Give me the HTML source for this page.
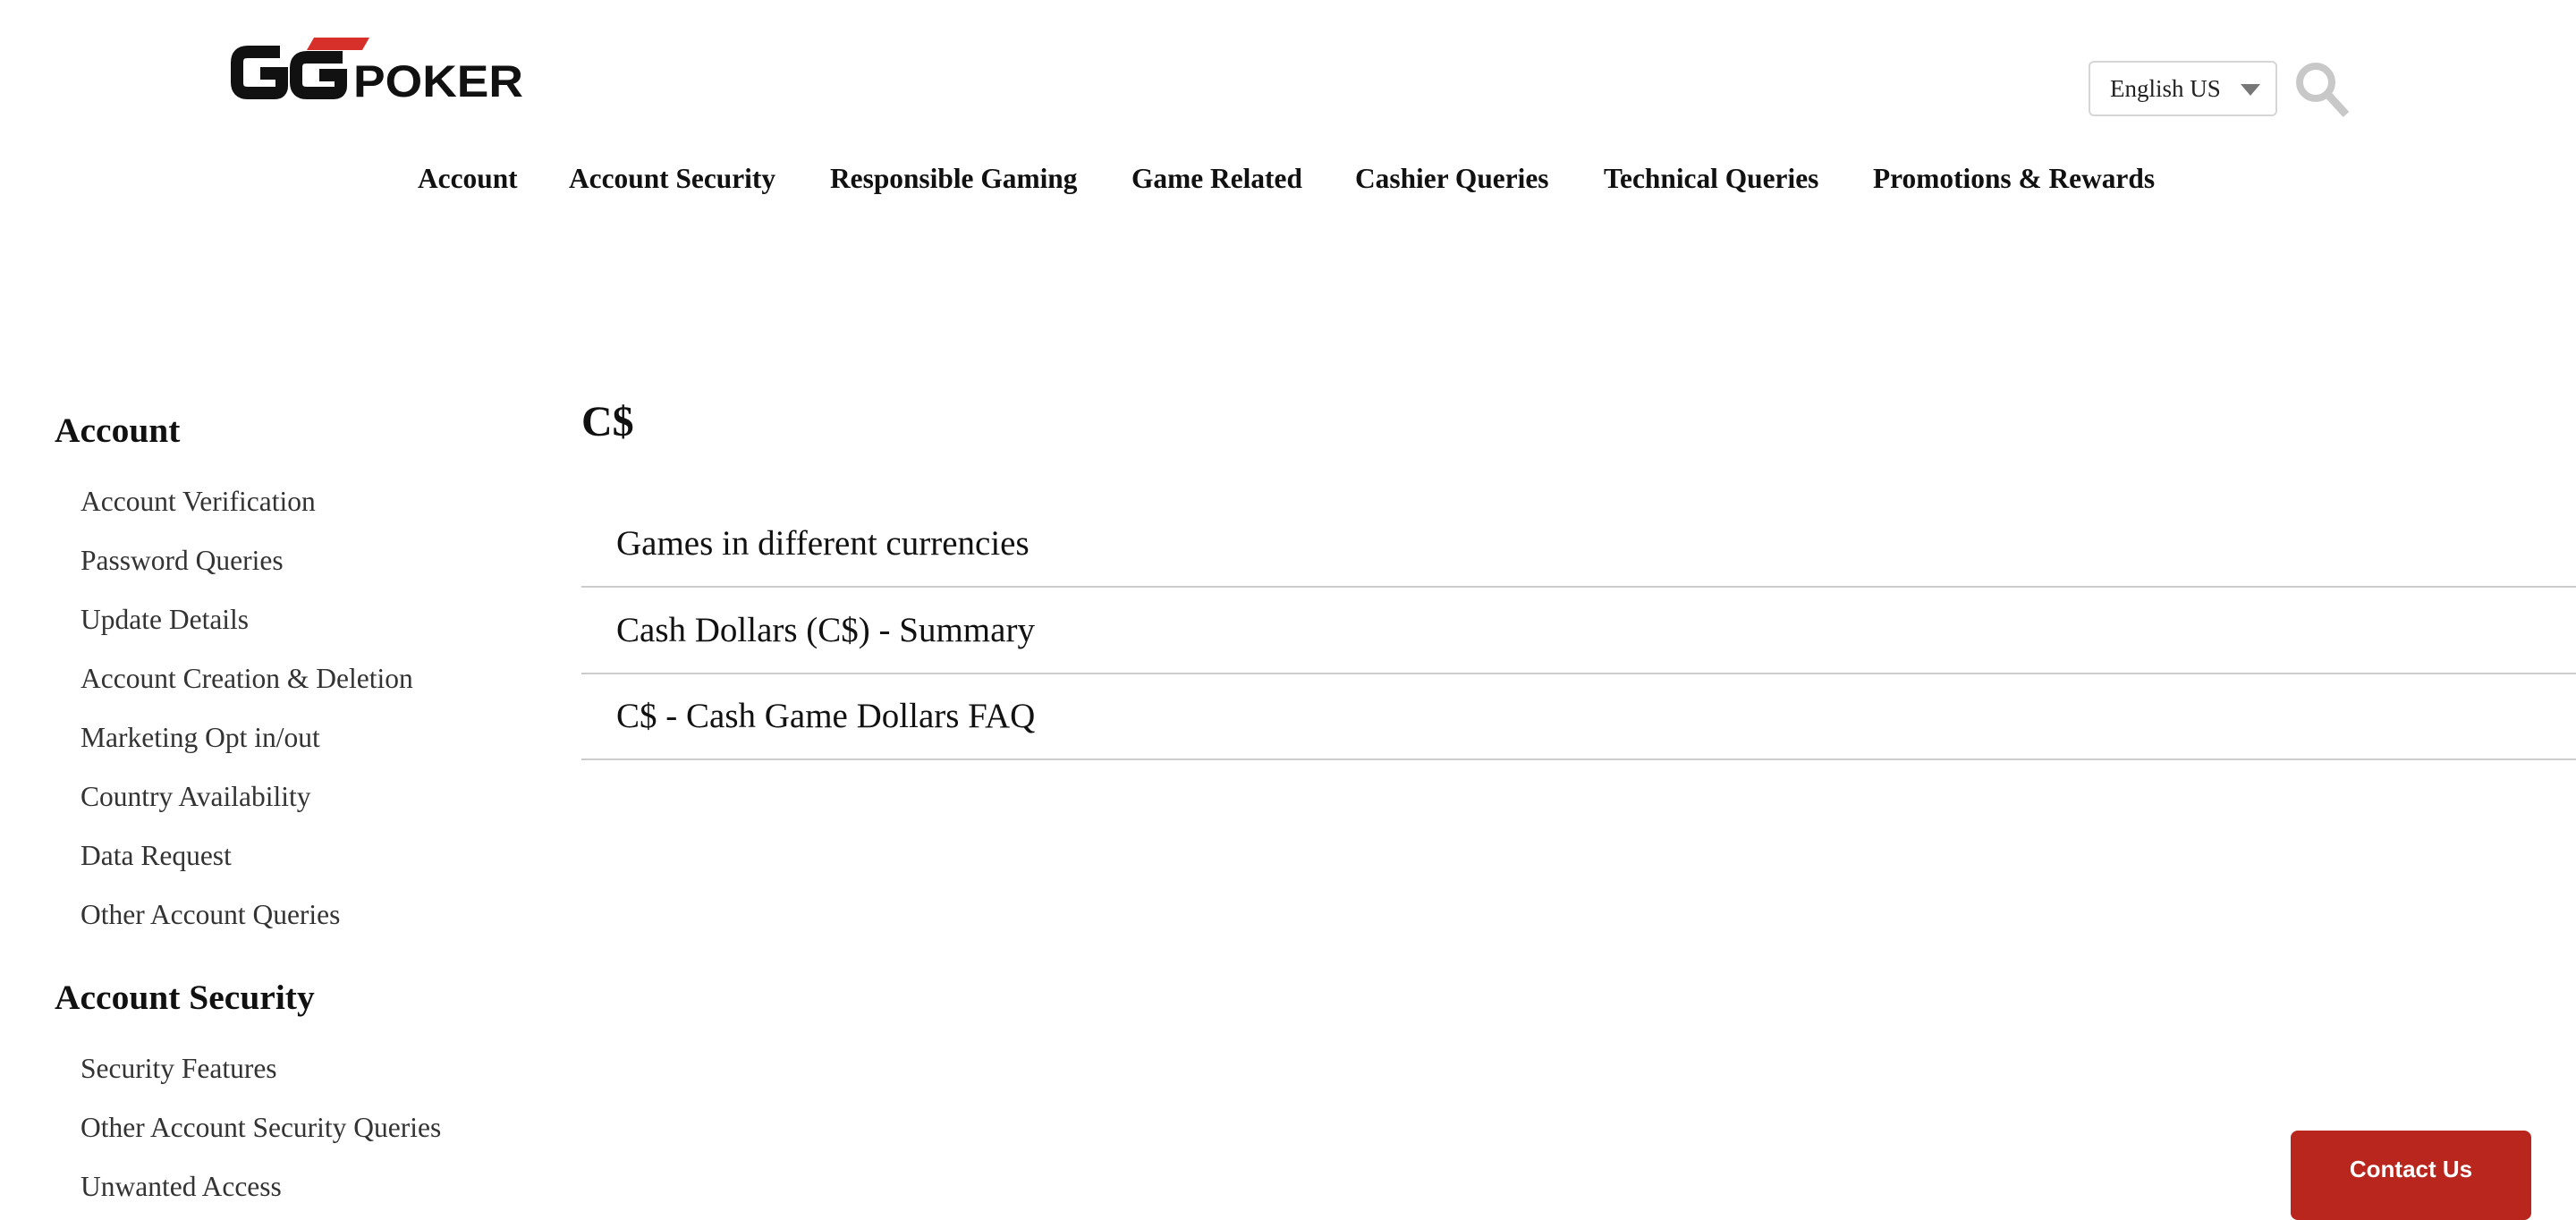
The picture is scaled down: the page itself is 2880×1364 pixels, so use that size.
<!DOCTYPE html>
<html><head><meta charset="utf-8"><style>
*{margin:0;padding:0;box-sizing:border-box}
body{width:2880px;height:1350px;overflow:hidden;background:#fff;font-family:"Liberation Serif",serif;color:#111;position:relative}
.a{position:absolute;white-space:nowrap}
.nav{font-weight:bold;font-size:31.4px;top:182px}
.sh{font-weight:bold;font-size:39.5px;left:61px}
.si{font-size:31.5px;left:90px;color:#333}
.li{left:689px;font-size:39px;color:#111}
.ln{position:absolute;left:650px;right:0;height:2px;background:#ccc}
</style></head><body>
<svg class="a" style="left:255px;top:40px" width="332" height="74" viewBox="0 0 332 74">
<path d="M58 18 H22 Q10 18 10 30 V52 Q10 64 22 64 H52 Q60 64 60 56 V42 H36" fill="none" stroke="#111" stroke-width="14"/>
<path d="M128 24 H88 Q76 24 76 36 V52 Q76 64 88 64 H118 Q126 64 126 56 V44 H102" fill="none" stroke="#111" stroke-width="14"/>
<polygon points="96,2 158,2 150,16 88,16" fill="#d7302b"/>
<text x="140" y="68" font-family="Liberation Sans,sans-serif" font-weight="bold" font-size="50" fill="#111" textLength="190" lengthAdjust="spacingAndGlyphs">POKER</text>
</svg>
<div class="a nav" style="left:467px">Account</div>
<div class="a nav" style="left:636px">Account Security</div>
<div class="a nav" style="left:928px">Responsible Gaming</div>
<div class="a nav" style="left:1265px">Game Related</div>
<div class="a nav" style="left:1515px">Cashier Queries</div>
<div class="a nav" style="left:1793px">Technical Queries</div>
<div class="a nav" style="left:2094px">Promotions &amp; Rewards</div>
<div class="a" style="left:2335px;top:68px;width:211px;height:62px;border:2px solid #d6d6d6;border-radius:6px"></div>
<div class="a" style="left:2359px;top:84px;font-size:27px;color:#222">English US</div>
<div class="a" style="left:2505px;top:94px;width:0;height:0;border-left:11px solid transparent;border-right:11px solid transparent;border-top:13px solid #777"></div>
<svg class="a" style="left:2565px;top:68px" width="66" height="64" viewBox="0 0 66 64"><circle cx="24" cy="24" r="18" fill="none" stroke="#c8c8c8" stroke-width="8"/><line x1="37" y1="37" x2="58" y2="60" stroke="#c8c8c8" stroke-width="9"/></svg>
<div class="a sh" style="top:458px">Account</div>
<div class="a si" style="top:543px">Account Verification</div>
<div class="a si" style="top:609px">Password Queries</div>
<div class="a si" style="top:675px">Update Details</div>
<div class="a si" style="top:741px">Account Creation &amp; Deletion</div>
<div class="a si" style="top:807px">Marketing Opt in/out</div>
<div class="a si" style="top:873px">Country Availability</div>
<div class="a si" style="top:939px">Data Request</div>
<div class="a si" style="top:1005px">Other Account Queries</div>
<div class="a sh" style="top:1092px">Account Security</div>
<div class="a si" style="top:1177px">Security Features</div>
<div class="a si" style="top:1243px">Other Account Security Queries</div>
<div class="a si" style="top:1309px">Unwanted Access</div>
<div class="a" style="left:650px;top:444px;font-size:48px;font-weight:bold">C$</div>
<div class="a li" style="top:585px">Games in different currencies</div>
<div class="ln" style="top:655px"></div>
<div class="a li" style="top:682px">Cash Dollars (C$) - Summary</div>
<div class="ln" style="top:752px"></div>
<div class="a li" style="top:778px">C$ - Cash Game Dollars FAQ</div>
<div class="ln" style="top:848px"></div>
<div class="a" style="left:2561px;top:1264px;width:269px;height:100px;background:#b8261d;border-radius:8px;color:#fff;font-family:'Liberation Sans',sans-serif;font-weight:bold;font-size:26px;text-align:center;padding-top:28px">Contact Us</div>
</body></html>
